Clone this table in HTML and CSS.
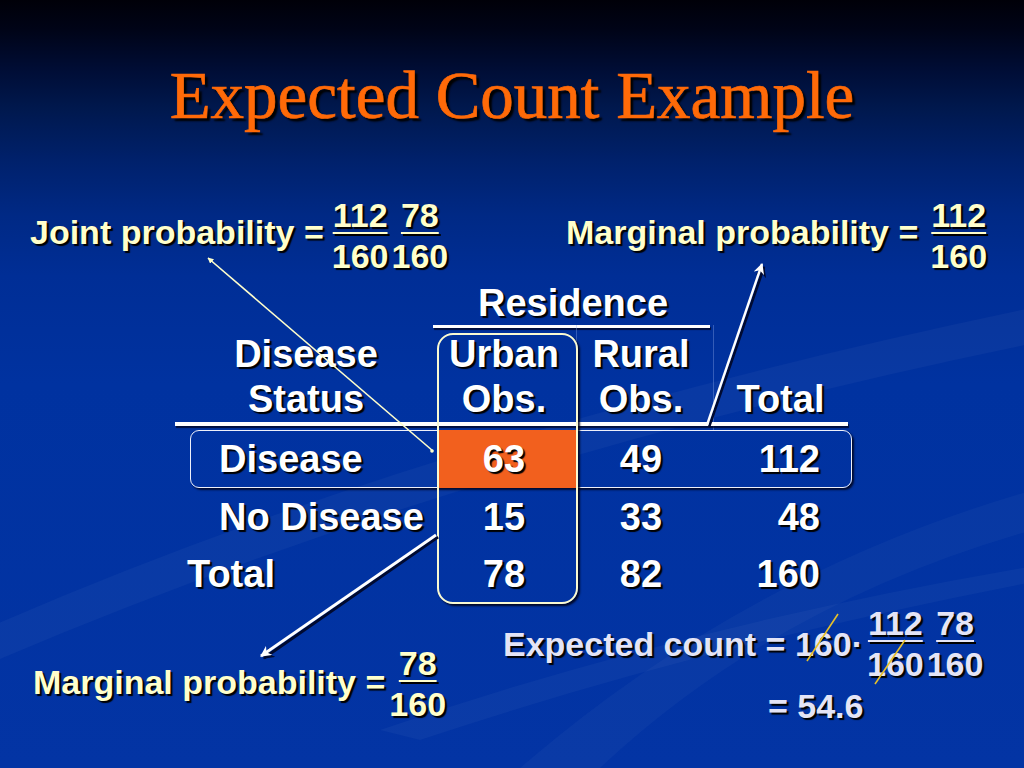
FILE: index.html
```html
<!DOCTYPE html>
<html lang="en">
<head>
<meta charset="utf-8">
<title>Expected Count Example</title>
<link rel="stylesheet" href="styles.css">
</head>
<body>
<div class="slide">
  <svg class="bg" width="1024" height="768" viewBox="0 0 1024 768">
    <path d="M-40 640 Q 430 430 1070 300 L 1070 336 Q 470 455 -40 676 Z" fill="#ffffff" opacity="0.035"/>
    <path d="M520 768 Q 760 560 1070 480 L 1070 520 Q 790 590 600 768 Z" fill="#ffffff" opacity="0.03"/>
    <path d="M380 730 Q 700 620 1070 560 L 1070 575 Q 720 640 420 740 Z" fill="#ffffff" opacity="0.035"/>
  </svg>

  <h1 class="title">Expected Count Example</h1>

  <div class="toprow">
    <div class="group">
      <span class="label cream">Joint probability =</span>
      <span class="fracs fracs-joint cream">
        <span class="frac"><span class="num">112</span><span class="den">160</span></span>
        <span class="frac"><span class="num">78</span><span class="den">160</span></span>
      </span>
    </div>
    <div class="group">
      <span class="label cream">Marginal probability =</span>
      <span class="fracs fracs-marg cream">
        <span class="frac"><span class="num">112</span><span class="den">160</span></span>
      </span>
    </div>
  </div>

  <div class="table">
    <div class="res">Residence</div>
    <div class="rule rule-res"></div>

    <div class="sep sep-a"></div>
    <div class="sep sep-b"></div>

    <div class="h h1">Disease<br>Status</div>
    <div class="h h2">Urban<br>Obs.</div>
    <div class="h h3">Rural<br>Obs.</div>
    <div class="h h4">Total</div>

    <div class="rule rule-head"></div>

    <div class="rowbox"></div>
    <div class="hilite"></div>
    <div class="urbanbox"></div>

    <div class="c lab r1">Disease</div>
    <div class="c u r1">63</div>
    <div class="c ru r1">49</div>
    <div class="c t r1">112</div>

    <div class="c lab r2">No Disease</div>
    <div class="c u r2">15</div>
    <div class="c ru r2">33</div>
    <div class="c t r2">48</div>

    <div class="c lab tot r3">Total</div>
    <div class="c u r3">78</div>
    <div class="c ru r3">82</div>
    <div class="c t r3">160</div>
  </div>

  <div class="botrow">
    <div class="group group-bl">
      <span class="label cream">Marginal probability =</span>
      <span class="fracs fracs-bl cream">
        <span class="frac"><span class="num">78</span><span class="den">160</span></span>
      </span>
    </div>
    <div class="expected">
      <div class="group">
        <span class="label lav">Expected count = 160·</span>
        <span class="fracs fracs-exp lav">
          <span class="frac"><span class="num">112</span><span class="den">160</span></span>
          <span class="frac"><span class="num">78</span><span class="den">160</span></span>
        </span>
      </div>
      <div class="result lav">= 54.6</div>
    </div>
  </div>

  <svg class="overlay" width="1024" height="768" viewBox="0 0 1024 768">
    <defs>
      <marker id="hcream" viewBox="0 0 10 10" refX="9" refY="5" markerWidth="6" markerHeight="6" orient="auto" markerUnits="userSpaceOnUse">
        <path d="M0 0 L10 5 L0 10 Z" fill="#ffffcc"/>
      </marker>
      <marker id="hwhite" viewBox="0 0 10 10" refX="9" refY="5" markerWidth="11" markerHeight="11" orient="auto" markerUnits="userSpaceOnUse">
        <path d="M0 0 L10 5 L0 10 L3 5 Z" fill="#ffffff"/>
      </marker>
      <marker id="hshadow" viewBox="0 0 10 10" refX="9" refY="5" markerWidth="11" markerHeight="11" orient="auto" markerUnits="userSpaceOnUse">
        <path d="M0 0 L10 5 L0 10 L3 5 Z" fill="#000a30"/>
      </marker>
    </defs>
    <line x1="433" y1="451" x2="208" y2="258" stroke="#ffffcc" stroke-width="1.6" marker-end="url(#hcream)"/>
    <circle cx="432" cy="451" r="1.8" fill="#ffffcc"/>
    <line x1="709" y1="427" x2="764" y2="267" stroke="#000a30" stroke-width="2.6" marker-end="url(#hshadow)"/>
    <line x1="707" y1="425" x2="762" y2="264" stroke="#ffffff" stroke-width="2.4" marker-end="url(#hwhite)"/>
    <line x1="438" y1="537" x2="264" y2="658" stroke="#000a30" stroke-width="3" marker-end="url(#hshadow)"/>
    <line x1="436" y1="535" x2="261" y2="656" stroke="#ffffff" stroke-width="2.8" marker-end="url(#hwhite)"/>
    <line x1="807" y1="661" x2="838" y2="614" stroke="#e6c02a" stroke-width="1.6"/>
    <line x1="875" y1="684" x2="905" y2="640" stroke="#e6c02a" stroke-width="1.6"/>
  </svg>
</div>
</body>
</html>
```

FILE: styles.css
```css
* {
  box-sizing: border-box;
  margin: 0;
  padding: 0;
}

html, body {
  width: 1024px;
  height: 768px;
  overflow: hidden;
  background: #000010;
}

.slide {
  position: relative;
  width: 1024px;
  height: 768px;
  overflow: hidden;
  padding-top: 62px;
  background: linear-gradient(180deg,
    #000008 0%,
    #000418 4%,
    #000d35 9%,
    #00184d 14%,
    #00216c 21%,
    #002985 28%,
    #002e96 36%,
    #0032a0 50%,
    #0334a4 100%);
  font-family: "Liberation Sans", Arial, sans-serif;
  font-weight: bold;
}

.bg {
  position: absolute;
  left: 0;
  top: 0;
}

.overlay {
  position: absolute;
  left: 0;
  top: 0;
  z-index: 5;
  pointer-events: none;
}

.title {
  position: relative;
  font-family: "Liberation Serif", "Times New Roman", serif;
  font-weight: normal;
  font-size: 67px;
  line-height: 67px;
  text-align: center;
  color: #ff6a08;
  -webkit-text-stroke: 0.7px #ff6a08;
  text-shadow: 3px 3px 2px #000000;
}

.cream {
  color: #ffffcc;
  text-shadow: 2px 2px 1px #000000;
}

.lav {
  color: #e4e4f6;
  text-shadow: 2px 2px 1px #000000;
}

.toprow {
  position: relative;
  display: grid;
  grid-template-columns: 536px auto;
  padding-left: 30px;
  margin-top: 69px;
}

.group {
  display: flex;
  align-items: flex-start;
}

.label {
  font-size: 34px;
  line-height: 34px;
  margin-top: 17px;
  white-space: nowrap;
}

.fracs {
  display: flex;
  gap: 3px;
  font-size: 34px;
  line-height: 34px;
}

.fracs-joint { margin-left: 8px; }
.fracs-marg { margin-left: 12px; }
.fracs-bl { margin-left: 4px; }
.fracs-exp { margin-left: 4px; }

.frac {
  display: flex;
  flex-direction: column;
  align-items: center;
  gap: 7px;
}

.num {
  text-decoration: underline;
  text-decoration-thickness: 2px;
  text-underline-offset: 5px;
}

/* table */
.table {
  position: relative;
  display: grid;
  grid-template-columns: 262px 141px 135px 139px;
  grid-template-rows: 44px 3px auto 4px 4px 58px 58px 57px;
  width: 677px;
  margin: 8px 0 0 175px;
  color: #ffffff;
  font-size: 38px;
  text-shadow: 2px 2px 1px #000000;
}

.res {
  grid-column: 2 / 4;
  grid-row: 1;
  text-align: center;
  line-height: 44px;
  padding-right: 4px;
}

.rule {
  background: #ffffff;
  box-shadow: 1px 2px 1px rgba(0, 0, 20, 0.7);
}

.rule-res {
  grid-column: 2 / 4;
  grid-row: 2;
  margin: 0 3px 0 -4px;
}

.rule-head {
  grid-column: 1 / 5;
  grid-row: 4;
  margin-right: 4px;
}

.sep {
  grid-row: 2 / 6;
  width: 1px;
  background: rgba(150, 175, 235, 0.35);
}

.sep-a { grid-column: 3; margin-left: -2px; }
.sep-b { grid-column: 4; }

.h {
  grid-row: 3;
  padding-top: 4px;
  line-height: 45px;
  text-align: center;
  position: relative;
  z-index: 2;
}

.h1 { grid-column: 1; }
.h2 { grid-column: 2; padding-right: 7px; }
.h3 { grid-column: 3; padding-right: 9px; }
.h4 { grid-column: 4; align-self: end; padding-right: 4px; }

.rowbox {
  grid-column: 1 / 5;
  grid-row: 6;
  margin-left: 15px;
  border: 1.5px solid #eef0fa;
  border-radius: 9px;
  box-shadow: 2px 2px 2px rgba(0, 0, 20, 0.8);
}

.hilite {
  grid-column: 2;
  grid-row: 6;
  background: #f2601e;
}

.urbanbox {
  grid-column: 2;
  grid-row: 3 / 9;
  margin-top: 5px;
  margin-bottom: -1px;
  border: 2.5px solid #fafad2;
  border-radius: 16px;
  box-shadow: 2px 2px 2px rgba(0, 0, 20, 0.85);
  position: relative;
  z-index: 1;
}

.c {
  position: relative;
  z-index: 2;
  white-space: nowrap;
}

.r1 { grid-row: 6; line-height: 58px; }
.r2 { grid-row: 7; line-height: 58px; }
.r3 { grid-row: 8; line-height: 57px; }

.lab { grid-column: 1; padding-left: 44px; }
.lab.tot { padding-left: 12px; }
.u { grid-column: 2; text-align: center; padding-right: 7px; }
.ru { grid-column: 3; text-align: center; padding-right: 9px; }
.t { grid-column: 4; text-align: right; padding-right: 32px; }

/* bottom */
.botrow {
  position: relative;
  display: grid;
  grid-template-columns: 470px auto;
  padding-left: 33px;
}

.group-bl {
  margin-top: 43px;
}

.group-bl .label {
  margin-top: 19px;
}

.expected {
  margin-top: 3px;
}

.expected .label {
  margin-top: 21px;
}

.result {
  font-size: 34px;
  line-height: 34px;
  margin-top: 8px;
  margin-left: 265px;
}
```
